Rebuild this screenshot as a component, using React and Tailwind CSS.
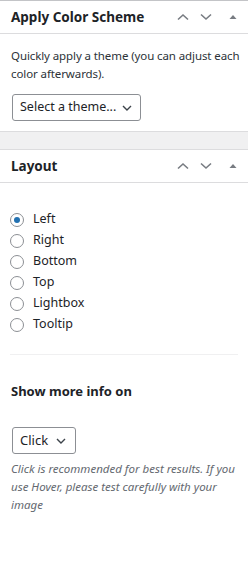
import React, { useState } from 'react';

const FONT = { fontFamily: '"Noto Sans", "Open Sans", sans-serif' };

// Up/down chevrons plus the little toggle caret, like the WP postbox header
const HeaderControls = () => (
    <div className="flex items-center gap-[11px] text-[#787c82]">
        <svg width="12" height="8" viewBox="0 0 12 8" fill="none">
            <path d="M1 6.5 L6 2 L11 6.5" stroke="currentColor" strokeWidth="1.6" />
        </svg>
        <svg width="12" height="8" viewBox="0 0 12 8" fill="none">
            <path d="M1 1.5 L6 6 L11 1.5" stroke="currentColor" strokeWidth="1.6" />
        </svg>
        <svg width="14" height="8" viewBox="0 0 14 8" className="ml-[3px]">
            <path d="M3.5 6 L7 2 L10.5 6 Z" fill="currentColor" />
        </svg>
    </div>
);

const PanelHeader = ({ title }) => (
    <div className="flex items-center justify-between h-[33px] pl-[11px] pr-[8px] border-b border-[#dcdcde]">
        <h2 className="text-[13.5px] font-bold text-[#1d2327]">{title}</h2>
        <HeaderControls />
    </div>
);

const Chevron = () => (
    <svg width="10" height="6" viewBox="0 0 10 6" fill="none">
        <path d="M1 1 L5 5 L9 1" stroke="#3c434a" strokeWidth="1.4" />
    </svg>
);

const App = () => {
    const [layout, setLayout] = useState('Left');
    const options = ['Left', 'Right', 'Bottom', 'Top', 'Lightbox', 'Tooltip'];

    return (
        <div className="w-[248px] min-h-[564px] bg-white text-[#1d2327]" style={FONT}>
            {/* Apply Color Scheme */}
            <div className="border-t border-[#c3c4c7]">
                <PanelHeader title="Apply Color Scheme" />
                <div className="px-[11px] pt-[13px] pb-[10px]">
                    <p className="text-[11.5px] leading-[18px] tracking-[-0.1px] whitespace-nowrap text-[#2c3338]">
                        Quickly apply a theme (you can adjust each<br />color afterwards).
                    </p>
                    <div className="mt-[11px] flex items-center justify-between w-[129px] h-[27px] ml-[1px] pl-[7px] pr-[8px] border border-[#8c8f94] rounded-[3px] text-[12.5px]">
                        <span>Select a theme...</span>
                        <Chevron />
                    </div>
                </div>
            </div>

            {/* gap between panels */}
            <div className="h-[19px] bg-[#f0f0f1] border-t border-b border-[#dcdcde]" />

            {/* Layout */}
            <div>
                <PanelHeader title="Layout" />
                <div className="px-[10px] pt-[26px]">
                    <div className="flex flex-col">
                        {options.map((opt) => (
                            <label
                                key={opt}
                                className="flex items-center h-[21px] gap-[9px] text-[12.5px] cursor-pointer"
                                onClick={() => setLayout(opt)}
                            >
                                <span className="w-[14px] h-[14px] rounded-full border border-[#8c8f94] flex items-center justify-center bg-white">
                                    {layout === opt && <span className="w-[6px] h-[6px] rounded-full bg-[#2271b1]" />}
                                </span>
                                <span>{opt}</span>
                            </label>
                        ))}
                    </div>

                    <div className="mt-[19px] border-t border-[#f0f0f1]" />

                    <h3 className="mt-[27px] text-[13px] font-bold leading-[18px] ml-[1px]">Show more info on</h3>

                    <div className="mt-[27px] flex items-center justify-between w-[64px] h-[27px] ml-[2px] pl-[7px] pr-[9px] border border-[#8c8f94] rounded-[3px] text-[13px]">
                        <span>Click</span>
                        <Chevron />
                    </div>

                    <p className="mt-[6px] ml-[1px] text-[11.5px] italic leading-[18px] text-[#646970]">
                        Click is recommended for best results. If you use Hover, please test carefully with your image
                    </p>
                </div>
            </div>
        </div>
    );
};

export default App;
